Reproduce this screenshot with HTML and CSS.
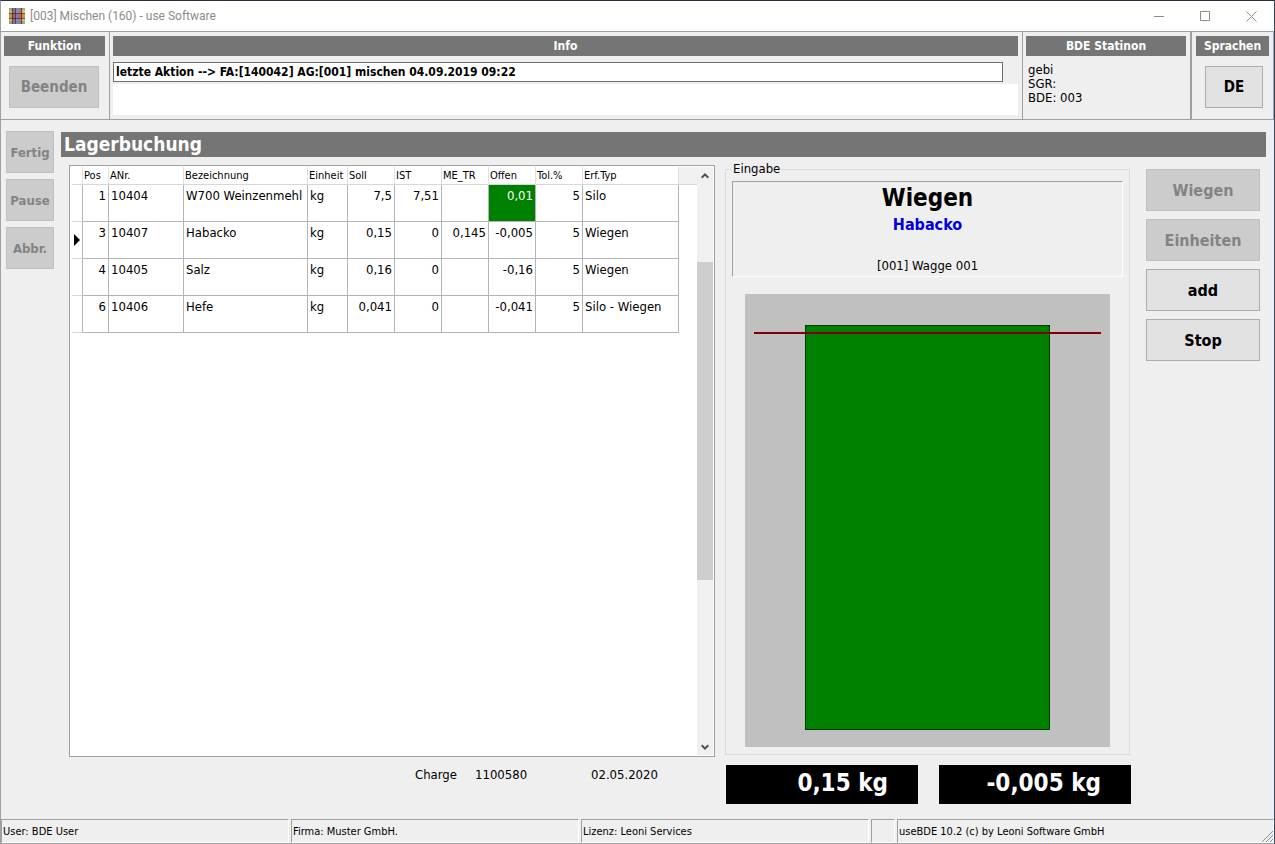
FILE: index.html
```
<!DOCTYPE html>
<html lang="de">
<head>
<meta charset="utf-8">
<title>[003] Mischen (160) - use Software</title>
<link rel="stylesheet" href="styles.css">
</head>
<body>
<div class="window">
  <header class="titlebar">
    <svg class="app-icon" width="16" height="16" viewBox="0 0 16 16" aria-hidden="true">
      <rect width="16" height="16" fill="#9a8a98"/>
      <path fill="#d0b850" d="M0 0h3v16H0z"/><path fill="#a8667a" d="M4 0h2v16H4z"/><path fill="#6a9ac0" d="M7 0h2v16H7z"/><path fill="#c8707a" d="M9 0h3v16H9z"/><path fill="#d8c848" d="M13 0h3v16h-3z"/>
      <path fill="#5a8ac0" fill-opacity=".5" d="M0 0h16v2H0zM0 13h16v3H0z"/>
      <path fill="#c83c50" fill-opacity=".35" d="M0 6h16v4H0z"/>
      <path stroke="#2b2530" stroke-opacity=".65" fill="none" d="M3.5 0v16M6.5 0v16M12.5 0v16M0 5.5h16M0 10.5h16"/>
    </svg>
    <h1 class="window-title">[003] Mischen (160) - use Software</h1>
    <div class="window-controls">
      <button type="button" aria-label="Minimieren"><svg width="11" height="11" viewBox="0 0 11 11"><path d="M0 5.5h10"/></svg></button>
      <button type="button" aria-label="Maximieren"><svg width="11" height="11" viewBox="0 0 11 11"><path d="M.5 .5h9v9h-9z"/></svg></button>
      <button type="button" aria-label="Schließen"><svg width="11" height="11" viewBox="0 0 11 11"><path d="M.5 .5l10 10M10.500 .5l-10 10"/></svg></button>
    </div>
  </header>

  <div class="toolbar">
    <section class="panel panel-function">
      <h2 class="panel-head">Funktion</h2>
      <button type="button" class="btn btn-exit" disabled>Beenden</button>
    </section>
    <section class="panel panel-info">
      <h2 class="panel-head">Info</h2>
      <input class="info-line" type="text" aria-label="Info" readonly value="letzte Aktion --&gt; FA:[140042] AG:[001] mischen 04.09.2019 09:22">
      <div class="info-area"></div>
    </section>
    <section class="panel panel-station">
      <h2 class="panel-head">BDE Statinon</h2>
      <div class="station-lines">
        <div>gebi</div>
        <div>SGR:</div>
        <div>BDE: 003</div>
      </div>
    </section>
    <section class="panel panel-language">
      <h2 class="panel-head">Sprachen</h2>
      <button type="button" class="btn btn-language">DE</button>
    </section>
  </div>

  <div class="workspace">
    <nav class="side">
      <button type="button" class="btn btn-side" disabled>Fertig</button>
      <button type="button" class="btn btn-side" disabled>Pause</button>
      <button type="button" class="btn btn-side" disabled>Abbr.</button>
    </nav>
    <main class="main">
      <h2 class="page-title">Lagerbuchung</h2>
      <div class="content">
        <div class="booking">
          <div class="grid-box">
            <div class="grid-view">
              <table class="grid">
                <colgroup><col class="c-mark"><col class="c-pos"><col class="c-nr"><col class="c-name"><col class="c-unit"><col class="c-num"><col class="c-num"><col class="c-num"><col class="c-num"><col class="c-num"><col class="c-type"><col class="c-rest"></colgroup>
                <thead>
                  <tr><th></th><th>Pos</th><th>ANr.</th><th>Bezeichnung</th><th>Einheit</th><th>Soll</th><th>IST</th><th>ME_TR</th><th>Offen</th><th>Tol.%</th><th>Erf.Typ</th><th class="rest"></th></tr>
                </thead>
                <tbody>
                  <tr><td class="mark"></td><td class="num">1</td><td>10404</td><td>W700 Weinzenmehl</td><td>kg</td><td class="num">7,5</td><td class="num">7,51</td><td class="num"></td><td class="num done">0,01</td><td class="num">5</td><td>Silo</td></tr>
                  <tr><td class="mark"><svg width="6" height="12" viewBox="0 0 6 12" aria-hidden="true"><path d="M0 0l6 6-6 6z"/></svg></td><td class="num">3</td><td>10407</td><td>Habacko</td><td>kg</td><td class="num">0,15</td><td class="num">0</td><td class="num">0,145</td><td class="num">-0,005</td><td class="num">5</td><td>Wiegen</td></tr>
                  <tr><td class="mark"></td><td class="num">4</td><td>10405</td><td>Salz</td><td>kg</td><td class="num">0,16</td><td class="num">0</td><td class="num"></td><td class="num">-0,16</td><td class="num">5</td><td>Wiegen</td></tr>
                  <tr><td class="mark"></td><td class="num">6</td><td>10406</td><td>Hefe</td><td>kg</td><td class="num">0,041</td><td class="num">0</td><td class="num"></td><td class="num">-0,041</td><td class="num">5</td><td>Silo - Wiegen</td></tr>
                </tbody>
              </table>
            </div>
            <div class="scrollbar">
              <button type="button" aria-label="Nach oben"><svg width="8" height="6" viewBox="0 0 8 6"><path d="M.7 4.700L4 1.400l3.300 3.300"/></svg></button>
              <div class="track"><div class="thumb"></div></div>
              <button type="button" aria-label="Nach unten"><svg width="8" height="6" viewBox="0 0 8 6"><path d="M.7 1.300L4 4.600l3.300-3.300"/></svg></button>
            </div>
          </div>
          <div class="batch">
            <span>Charge</span><span class="batch-no">1100580</span><span>02.05.2020</span>
          </div>
        </div>

        <div class="entry">
          <fieldset class="entry-box">
            <legend>Eingabe</legend>
            <div class="entry-info">
              <div class="entry-mode">Wiegen</div>
              <div class="entry-item">Habacko</div>
              <div class="entry-scale">[001] Wagge 001</div>
            </div>
            <div class="gauge">
              <div class="gauge-bar"></div>
              <div class="gauge-limit"></div>
            </div>
          </fieldset>
          <div class="readouts">
            <output class="readout">0,15 kg</output>
            <output class="readout">-0,005 kg</output>
          </div>
        </div>

        <div class="actions">
          <button type="button" class="btn" disabled>Wiegen</button>
          <button type="button" class="btn" disabled>Einheiten</button>
          <button type="button" class="btn">add</button>
          <button type="button" class="btn">Stop</button>
        </div>
      </div>
    </main>
  </div>

  <footer class="statusbar">
    <div class="status">User: BDE User</div>
    <div class="status">Firma: Muster GmbH.</div>
    <div class="status">Lizenz: Leoni Services</div>
    <div class="status status-empty"></div>
    <div class="status status-version">useBDE 10.2 (c) by Leoni Software GmbH
      <svg class="grip" width="12" height="12" viewBox="0 0 12 12" aria-hidden="true"><path d="M1 12L12 1M5 12l7-7M9 12l3-3"/></svg>
    </div>
  </footer>
</div>
</body>
</html>
```
FILE: styles.css
```
* { box-sizing: border-box; }

body {
  margin: 0;
  background: #efefef;
  color: #000;
  font-family: Tahoma, "DejaVu Sans Condensed", "DejaVu Sans", sans-serif;
  font-size: 13px;
  line-height: 14px;
}

h1, h2 { margin: 0; }

button { font-family: inherit; padding: 0; }

.window {
  min-height: 100vh;
  display: flex;
  flex-direction: column;
  border: 1px solid #a0a0a0;
  border-top-color: #2b303e;
  border-right-color: #34465c;
}

/* Title bar */
.titlebar {
  display: flex;
  align-items: center;
  height: 30px;
  padding-left: 8px;
  gap: 5px;
  background: #fff;
}

.window-title {
  flex: 1;
  color: #8c8c8c;
  font: 12px/16px "Segoe UI", Roboto, sans-serif;
}

.window-controls { display: flex; }

.window-controls button {
  width: 46px;
  height: 30px;
  border: 0;
  background: none;
}

.window-controls svg { display: block; margin: 0 auto; }

.window-controls path { fill: none; stroke: #8c8c8c; }

/* Header panels */
.toolbar {
  display: flex;
  height: 89px;
  border-top: 1px solid #a0a0a0;
  border-bottom: 1px solid #a0a0a0;
}

.panel {
  display: flex;
  flex-direction: column;
  padding: 4px 4px 4px 3px;
  border-right: 1px solid #a0a0a0;
}

.panel-head {
  height: 20px;
  background: #757575;
  color: #fff;
  font-size: 12px;
  line-height: 21px;
  text-align: center;
}

.panel-function { width: 109px; padding-right: 4px; }
.panel-info { flex: 1; }
.panel-station { width: 169px; border-right-width: 2px; }
.panel-language { width: 82px; padding: 4px; }

.btn {
  height: 42px;
  border: 1px solid #adadad;
  background: #e1e1e1;
  color: #000;
  font-size: 16px;
  font-weight: bold;
}

.btn:disabled {
  border-color: #bfbfbf;
  background: #ccc;
  color: #838383;
}

.panel .btn { flex: none; font-size: 15px; }

.btn-exit { width: 90px; margin: 10px 5px 0; }
.btn-language { margin: 10px 6px 0 9px; }

.info-line {
  height: 20px;
  margin: 6px 15px 2px 0;
  padding: 0 2px;
  border: 1px solid #6e6e6e;
  background: #fff;
  color: #000;
  font: bold 12px/18px Tahoma, "DejaVu Sans Condensed", "DejaVu Sans", sans-serif;
}

.info-area { flex: 1; background: #fff; }

.station-lines { padding: 7px 2px; }

/* Workspace */
.workspace {
  flex: 1;
  display: flex;
  gap: 7px;
  padding: 11px 8px 15px 5px;
}

.side {
  display: flex;
  flex-direction: column;
  gap: 6px;
  width: 48px;
}

.side .btn { font-size: 13px; }

.main {
  flex: 1;
  display: flex;
  flex-direction: column;
  padding-top: 1px;
}

.page-title {
  height: 25px;
  padding-left: 3px;
  background: #757575;
  color: #fff;
  font-size: 19px;
  line-height: 25px;
}

.content {
  flex: 1;
  display: flex;
  padding: 8px 6px 0 8px;
}

.booking {
  flex: 1;
  display: flex;
  flex-direction: column;
}

.grid-box {
  flex: 1;
  display: flex;
  border: 1px solid #a0a0a0;
  background: #fff;
  padding: 1px 1px 1px 2px;
}

.grid-view { flex: 1; }

.grid {
  table-layout: fixed;
  width: 625px;
  border-spacing: 0;
}

.c-mark { width: 11px; }
.c-pos { width: 26px; }
.c-nr { width: 75px; }
.c-name { width: 124px; }
.c-unit { width: 40px; }
.c-num { width: 47px; }
.c-type { width: 96px; }
.c-rest { width: 18px; }

.grid th {
  height: 18px;
  padding: 1px 0 0 1px;
  border-right: 1px solid #e0e0e0;
  border-bottom: 1px solid #d8d8d8;
  font-size: 11px;
  font-weight: normal;
  line-height: 14px;
  text-align: left;
  white-space: nowrap;
}

.grid .rest { border-right: 0; background: #f0f0f0; }

.grid td {
  height: 37px;
  padding: 4px 2px 0;
  border-right: 1px solid #b4b4b4;
  border-bottom: 1px solid #b4b4b4;
  vertical-align: top;
  white-space: nowrap;
}

.grid .num { text-align: right; }

.grid .mark {
  padding: 0 0 0 2px;
  border-bottom-color: #d8d8d8;
  vertical-align: middle;
}

.mark svg { display: block; }

.grid .done {
  background: #008000;
  color: #fff;
}

.scrollbar {
  display: flex;
  flex-direction: column;
  width: 16px;
  background: #f0f0f0;
}

.scrollbar button {
  height: 17px;
  border: 0;
  background: none;
}

.scrollbar svg { display: block; margin: 0 auto; }

.scrollbar path { fill: none; stroke: #505050; stroke-width: 2; }

.track {
  flex: 1;
  display: flex;
  flex-direction: column;
}

.track::before { content: ""; flex: 78; }
.track::after { content: ""; flex: 158; }

.thumb { flex: 317; background: #cdcdcd; }

.batch {
  display: flex;
  height: 47px;
  padding: 11px 0 0 346px;
}

.batch span { width: 60px; }

.batch .batch-no { width: 116px; }

/* Entry area */
.entry {
  width: 405px;
  margin-left: 11px;
  display: flex;
  flex-direction: column;
}

.entry-box {
  flex: 1;
  display: flex;
  flex-direction: column;
  min-width: 0;
  margin: -3px 1px 10px -1px;
  padding: 5px 6px 7px;
  border: 1px solid #dcdcdc;
}

.entry-box legend { padding: 0 1px; line-height: 14px; }

.entry-info {
  height: 96px;
  padding-top: 2px;
  border: 1px solid #a0a0a0;
  border-right-color: #fff;
  border-bottom-color: #fff;
  text-align: center;
}

.entry-mode { font-size: 24px; font-weight: bold; line-height: 29px; }
.entry-item { color: #0000e0; font-size: 16px; font-weight: bold; line-height: 23px; }
.entry-scale { margin-top: 23px; }

.gauge {
  position: relative;
  flex: 1;
  display: flex;
  margin: 17px 13px 0;
  padding: 31px 60px 17px;
  background: #c0c0c0;
}

.gauge-bar { flex: 1; border: 1px solid #003c00; background: #008000; }

.gauge-limit {
  position: absolute;
  top: 38px;
  left: 9px;
  right: 9px;
  height: 2px;
  background: #800000;
}

.readouts { display: flex; gap: 21px; }

.readout {
  flex: 1;
  height: 39px;
  padding-right: 30px;
  background: #000;
  color: #fff;
  font-size: 24px;
  font-weight: bold;
  line-height: 37px;
  text-align: right;
}

.actions {
  display: flex;
  flex-direction: column;
  gap: 8px;
  width: 114px;
  margin: 4px 0 0 15px;
}

/* Status bar */
.statusbar {
  display: flex;
  gap: 2px;
  height: 24px;
  font-size: 11px;
  line-height: 23px;
}

.status {
  width: 288px;
  padding-left: 1px;
  border: 1px solid #a0a0a0;
  border-right-color: #fff;
  border-bottom-color: #fff;
}

.status-empty { width: 24px; }

.status-version { position: relative; flex: 1; }

.grip { position: absolute; right: 0; bottom: 0; }

.grip path { fill: none; stroke: #909090; }
```
